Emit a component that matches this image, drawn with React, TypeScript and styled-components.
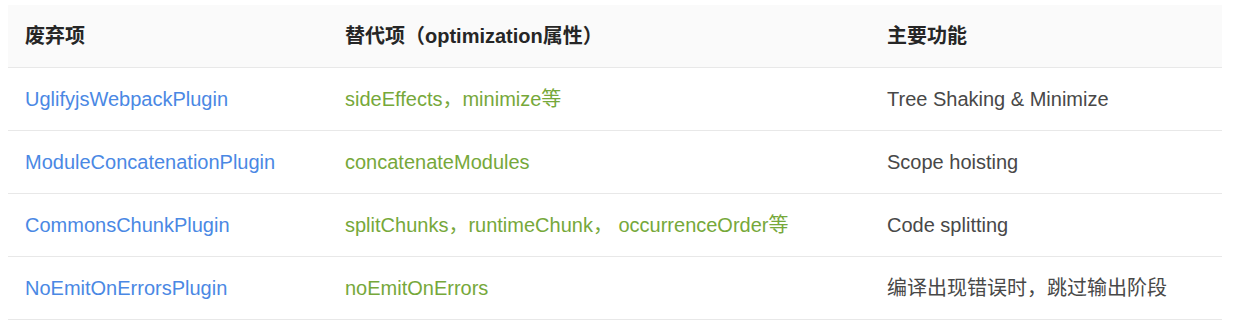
import styled, { createGlobalStyle } from 'styled-components'

const GlobalStyle = createGlobalStyle`
  body {
    margin: 0;
    background: #fff;
    font-family: 'Liberation Sans', Arial, 'Noto Sans CJK SC', sans-serif;
  }
`

const Wrapper = styled.div`
  padding: 5px 17px 0 8px;
`

const Table = styled.table`
  width: 1214px;
  border-collapse: collapse;
  table-layout: fixed;
  font-size: 20px;
  line-height: 28px;
`

const HeadCell = styled.th<{ $width: number }>`
  width: ${(p) => p.$width}px;
  height: 62px;
  padding: 0 0 0 17px;
  background: #fafafa;
  border-bottom: 1px solid #e8e8e8;
  text-align: left;
  vertical-align: middle;
  font-weight: 700;
  color: #262626;
`

const Cell = styled.td<{ $tone?: 'link' | 'code' | 'text' }>`
  height: 62px;
  padding: 0 0 0 17px;
  border-bottom: 1px solid #e8e8e8;
  vertical-align: middle;
  white-space: nowrap;
  color: ${(p) =>
    p.$tone === 'link' ? '#4a88e4' : p.$tone === 'code' ? '#76a83a' : '#484848'};
`

const rows = [
  {
    plugin: 'UglifyjsWebpackPlugin',
    option: 'sideEffects，minimize等',
    desc: 'Tree Shaking & Minimize',
  },
  {
    plugin: 'ModuleConcatenationPlugin',
    option: 'concatenateModules',
    desc: 'Scope hoisting',
  },
  {
    plugin: 'CommonsChunkPlugin',
    option: 'splitChunks，runtimeChunk， occurrenceOrder等',
    desc: 'Code splitting',
  },
  {
    plugin: 'NoEmitOnErrorsPlugin',
    option: 'noEmitOnErrors',
    desc: '编译出现错误时，跳过输出阶段',
  },
]

const App = () => {
  return (
    <Wrapper>
      <GlobalStyle />
      <Table>
        <thead>
          <tr>
            <HeadCell $width={303}>废弃项</HeadCell>
            <HeadCell $width={525}>替代项（optimization属性）</HeadCell>
            <HeadCell $width={335}>主要功能</HeadCell>
          </tr>
        </thead>
        <tbody>
          {rows.map((row) => (
            <tr key={row.plugin}>
              <Cell $tone='link'>{row.plugin}</Cell>
              <Cell $tone='code'>{row.option}</Cell>
              <Cell>{row.desc}</Cell>
            </tr>
          ))}
        </tbody>
      </Table>
    </Wrapper>
  )
}

export default App
